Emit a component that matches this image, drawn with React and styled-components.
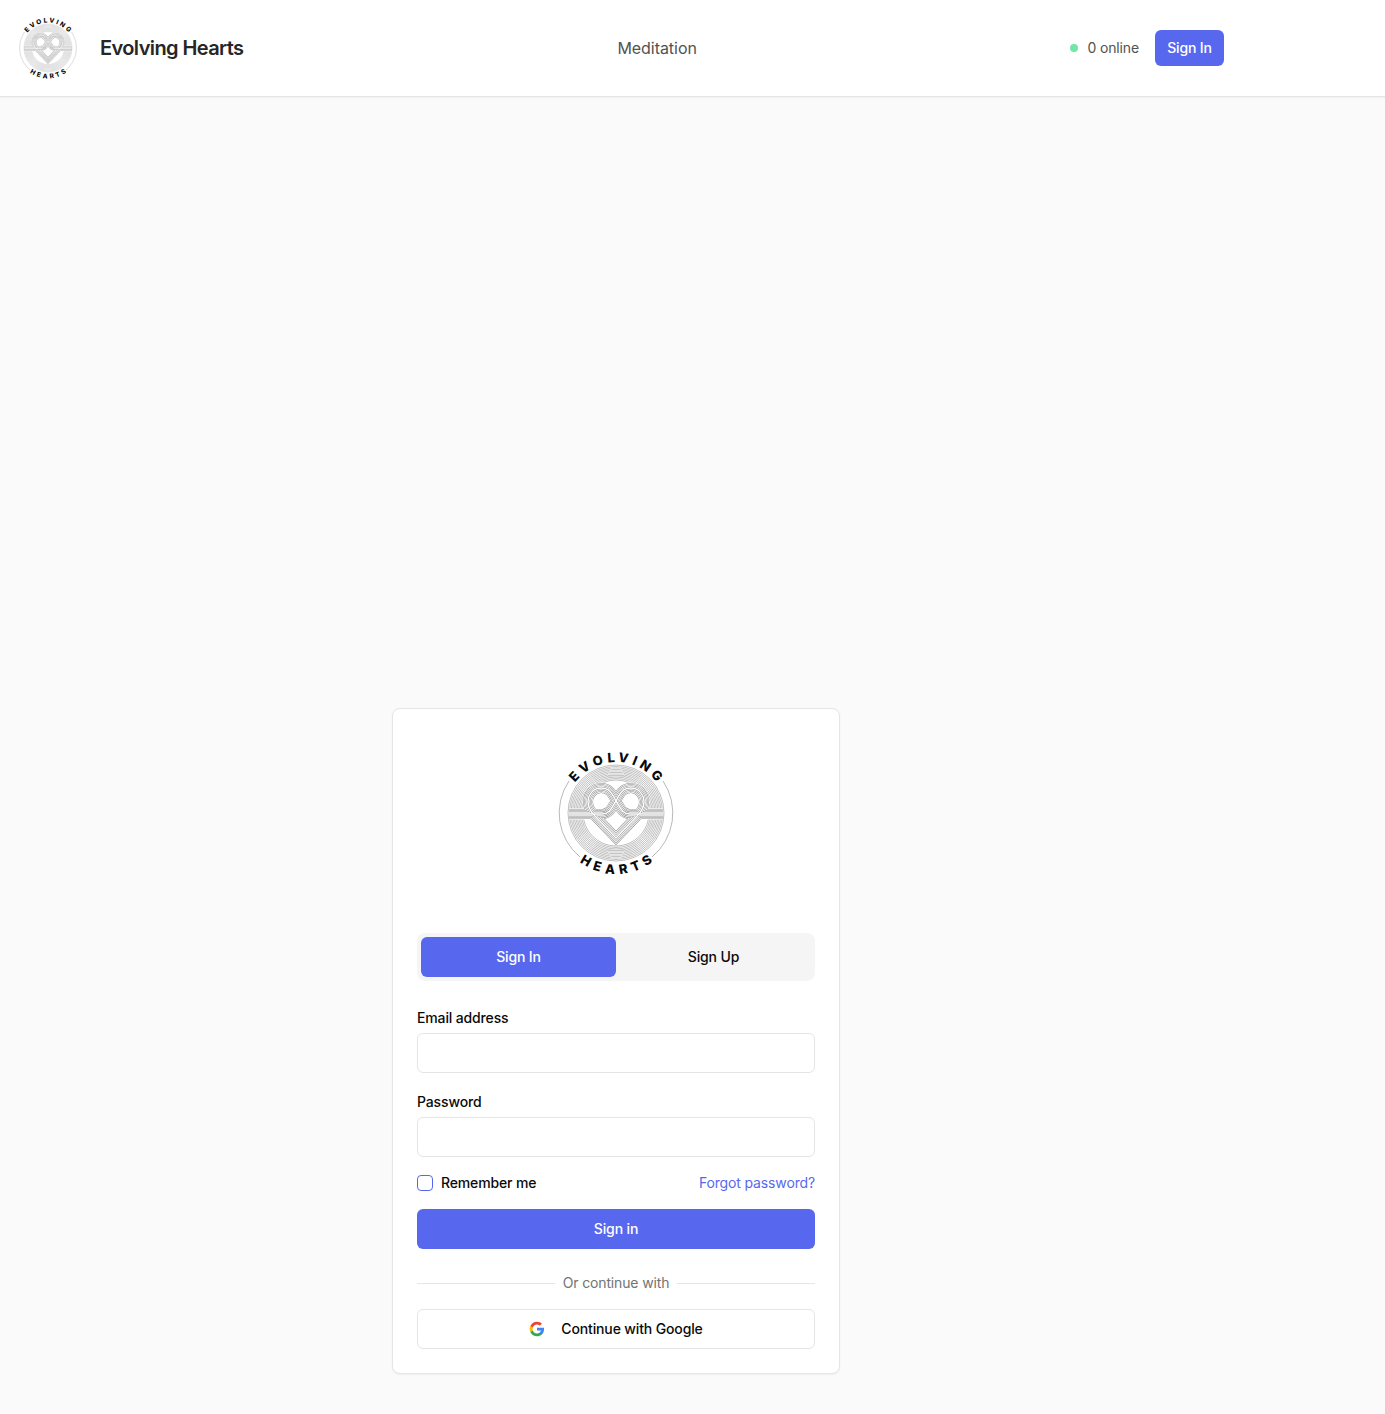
import React from 'react';
import styled, { createGlobalStyle } from 'styled-components';

const GlobalStyle = createGlobalStyle`
  html, body {
    margin: 0;
    padding: 0;
    background: #fafafa;
    font-family: Inter, "Liberation Sans", sans-serif;
    color: #0a0a0a;
  }
  * { box-sizing: border-box; }
`;

const Page = styled.div`
  display: flex;
  flex-direction: column;
  min-height: 1414px;
`;

const Header = styled.header`
  height: 97px;
  background: #fff;
  border-bottom: 1px solid #e5e5e5;
  box-shadow: 0 1px 2px rgba(0, 0, 0, 0.04);
`;

const HeaderInner = styled.div`
  width: 1232px;
  height: 96px;
  padding: 0 8px 0 16px;
  display: flex;
  align-items: center;
`;

const Brand = styled.div`
  display: flex;
  align-items: center;
  gap: 20px;
`;

const Title = styled.span`
  font-size: 20px;
  line-height: 28px;
  font-weight: 600;
  letter-spacing: -0.6px;
  color: #262626;
  white-space: nowrap;
`;

const NavLink = styled.a`
  margin-left: 374px;
  font-size: 16px;
  line-height: 24px;
  letter-spacing: -0.05px;
  color: #525252;
`;

const Status = styled.div`
  margin-left: auto;
  display: flex;
  align-items: center;
  gap: 16px;
`;

const Online = styled.span`
  display: flex;
  align-items: center;
  gap: 9px;
  font-size: 14px;
  line-height: 20px;
  letter-spacing: -0.14px;
  color: #525252;
`;

const Dot = styled.span`
  width: 8px;
  height: 8px;
  border-radius: 50%;
  background: #6ee7a7;
`;

const Button = styled.button`
  border: 0;
  border-radius: 6px;
  background: #5868ee;
  color: #fff;
  font-family: inherit;
  font-size: 14px;
  line-height: 20px;
  letter-spacing: -0.14px;
  font-weight: 500;
  height: ${(p) => (p.$small ? '36px' : '40px')};
  width: ${(p) => (p.$small ? '69px' : '100%')};
  padding: 0;
`;

const Main = styled.main`
  width: 1232px;
  padding: 611px 0 40px;
  display: flex;
  justify-content: center;
`;

const Card = styled.section`
  width: 448px;
  height: 666px;
  padding: 40px 24px 24px;
  background: #fff;
  border: 1px solid #e5e5e5;
  border-radius: 8px;
  box-shadow: 0 1px 2px rgba(0, 0, 0, 0.05);
  display: flex;
  flex-direction: column;
`;

const LogoRow = styled.div`
  display: flex;
  justify-content: center;
  margin-bottom: 56px;
`;

const Tabs = styled.div`
  height: 48px;
  padding: 4px;
  display: grid;
  grid-template-columns: 1fr 1fr;
  background: #f5f5f5;
  border-radius: 8px;
  margin-bottom: 27px;
`;

const Tab = styled.button`
  border: 0;
  border-radius: 6px;
  padding: 0;
  font-family: inherit;
  font-size: 14px;
  line-height: 20px;
  letter-spacing: -0.14px;
  font-weight: 500;
  background: ${(p) => (p.$active ? '#5868ee' : 'transparent')};
  color: ${(p) => (p.$active ? '#fff' : '#0a0a0a')};
`;

const Field = styled.div`
  display: flex;
  flex-direction: column;
  gap: 5px;
  margin-bottom: ${(p) => p.$gap}px;
`;

const Label = styled.label`
  font-size: 14px;
  line-height: 20px;
  letter-spacing: -0.14px;
  font-weight: 500;
  color: #0a0a0a;
`;

const Input = styled.input`
  height: 40px;
  width: 100%;
  background: #fff;
  border: 1px solid #e5e5e5;
  border-radius: 6px;
`;

const OptionsRow = styled.div`
  display: flex;
  align-items: center;
  justify-content: space-between;
  height: 20px;
  margin-bottom: 16px;
`;

const Remember = styled.label`
  display: flex;
  align-items: center;
  gap: 8px;
  font-size: 14px;
  line-height: 20px;
  letter-spacing: -0.14px;
  font-weight: 500;
  color: #0a0a0a;
`;

const Checkbox = styled.span`
  width: 16px;
  height: 16px;
  border: 1px solid #5868ee;
  border-radius: 4px;
  background: #fff;
`;

const ForgotLink = styled.a`
  font-size: 14px;
  line-height: 20px;
  letter-spacing: -0.14px;
  color: #5868ee;
`;

const Divider = styled.div`
  display: flex;
  align-items: center;
  gap: 8px;
  margin: 24px 0 16px;
  font-size: 14px;
  line-height: 20px;
  letter-spacing: -0.14px;
  color: #737373;

  &::before, &::after {
    content: '';
    flex: 1;
    height: 1px;
    background: #e5e5e5;
  }
`;

const GoogleButton = styled.button`
  height: 40px;
  width: 100%;
  padding: 0;
  display: flex;
  align-items: center;
  justify-content: center;
  gap: 16px;
  background: #fff;
  border: 1px solid #e5e5e5;
  border-radius: 6px;
  font-family: inherit;
  font-size: 14px;
  line-height: 20px;
  letter-spacing: -0.14px;
  font-weight: 500;
  color: #0a0a0a;
`;

const LogoSvg = styled.svg`
  flex-shrink: 0;
`;

const LogoText = styled.text`
  font-family: Inter, "Liberation Sans", sans-serif;
  font-size: 13px;
  font-weight: 800;
  letter-spacing: ${(p) => p.$spacing}px;
  fill: #0a0a0a;
`;

const HEART =
  'M-47 1 H-14 C-6 1 -4 -6 0 -12 C4 -20 7 -25 15 -25 C23 -25 28 -18 28 -11 C28 -5 25 -1 21 3 L0 25 L-21 3 C-25 -1 -28 -5 -28 -11 C-28 -18 -23 -25 -15 -25 C-7 -25 -4 -20 0 -12 C4 -6 6 1 14 1 H47';

// concentric hairlines behind the heart
const RINGS = [33, 34.5, 36, 37.5, 39, 40.5, 42, 43.5, 45, 46.5, 48];
// stacked strokes, alternating ink and paper, read as parallel lines
const BAND = [10, 9, 7.5, 6.5, 5, 4, 2.5, 1.5];
// short level lines that interrupt the rings at the top and bottom
const TICKS = [0, 1.5, 3, 4.5, 6, 7.5];

const Logo = ({ id, size, lineColor }) => (
  <LogoSvg width={size} height={size} viewBox="-64 -64 128 128" fill="none">
    <defs>
      <path id={`${id}-top`} d="M-51 0 A51 51 0 0 1 51 0" />
      <path id={`${id}-bottom`} d="M-61 0 A61 61 0 0 0 61 0" />
    </defs>
    <path d="M-47 -32 A57 57 0 0 0 -36 44" stroke="#8a8a8a" strokeWidth="0.6" />
    <path d="M47 -32 A57 57 0 0 1 36 44" stroke="#8a8a8a" strokeWidth="0.6" />
    {RINGS.map((r) => (
      <circle key={r} r={r} stroke={lineColor} strokeWidth="0.55" />
    ))}
    <path d="M-4 -46 H4 L9 -37 H-9 Z M-4 46 H4 L9 37 H-9 Z" fill="#fff" />
    {TICKS.map((t) => (
      <path
        key={t}
        d={`M${-4 - t * 0.6} ${-45 + t} H${4 + t * 0.6} M${-4 - t * 0.6} ${45 - t} H${4 + t * 0.6}`}
        stroke={lineColor}
        strokeWidth="0.5"
      />
    ))}
    <path d={HEART} stroke="#fff" strokeWidth="11" strokeLinejoin="round" />
    {BAND.map((w, i) => (
      <path
        key={w}
        d={HEART}
        stroke={i % 2 === 0 ? lineColor : '#fff'}
        strokeWidth={w}
        strokeLinejoin="miter"
      />
    ))}
    <LogoText textAnchor="middle" $spacing={3.9}>
      <textPath href={`#${id}-top`} startOffset="51%">EVOLVING</textPath>
    </LogoText>
    <LogoText textAnchor="middle" $spacing={5}>
      <textPath href={`#${id}-bottom`} startOffset="51.5%">HEARTS</textPath>
    </LogoText>
  </LogoSvg>
);

const GoogleIcon = () => (
  <svg width="16" height="16" viewBox="0 0 24 24">
    <path fill="#4285F4" d="M22.56 12.25c0-.78-.07-1.53-.2-2.25H12v4.26h5.92c-.26 1.37-1.04 2.53-2.21 3.31v2.77h3.57c2.08-1.92 3.28-4.74 3.28-8.09z" />
    <path fill="#34A853" d="M12 23c2.97 0 5.46-.98 7.28-2.66l-3.57-2.77c-.98.66-2.23 1.06-3.71 1.06-2.86 0-5.29-1.93-6.16-4.53H2.18v2.84C3.99 20.53 7.7 23 12 23z" />
    <path fill="#FBBC05" d="M5.84 14.09c-.22-.66-.35-1.36-.35-2.09s.13-1.43.35-2.09V7.07H2.18C1.43 8.55 1 10.22 1 12s.43 3.45 1.18 4.93l2.85-2.22.81-.62z" />
    <path fill="#EA4335" d="M12 5.38c1.62 0 3.06.56 4.21 1.64l3.15-3.15C17.45 2.09 14.97 1 12 1 7.7 1 3.99 3.47 2.18 7.07l3.66 2.84c.87-2.6 3.3-4.53 6.16-4.53z" />
  </svg>
);

export default function App() {
  return (
    <Page>
      <GlobalStyle />
      <Header>
        <HeaderInner>
          <Brand>
            <Logo id="header-logo" size={64} lineColor="#a8a8a8" />
            <Title>Evolving Hearts</Title>
          </Brand>
          <NavLink>Meditation</NavLink>
          <Status>
            <Online>
              <Dot />
              0 online
            </Online>
            <Button $small>Sign In</Button>
          </Status>
        </HeaderInner>
      </Header>
      <Main>
        <Card>
          <LogoRow>
            <Logo id="card-logo" size={128} lineColor="#8c8c8c" />
          </LogoRow>
          <Tabs>
            <Tab $active>Sign In</Tab>
            <Tab>Sign Up</Tab>
          </Tabs>
          <Field $gap={19}>
            <Label>Email address</Label>
            <Input type="email" />
          </Field>
          <Field $gap={16}>
            <Label>Password</Label>
            <Input type="password" />
          </Field>
          <OptionsRow>
            <Remember>
              <Checkbox />
              Remember me
            </Remember>
            <ForgotLink>Forgot password?</ForgotLink>
          </OptionsRow>
          <Button>Sign in</Button>
          <Divider>Or continue with</Divider>
          <GoogleButton>
            <GoogleIcon />
            Continue with Google
          </GoogleButton>
        </Card>
      </Main>
    </Page>
  );
}
